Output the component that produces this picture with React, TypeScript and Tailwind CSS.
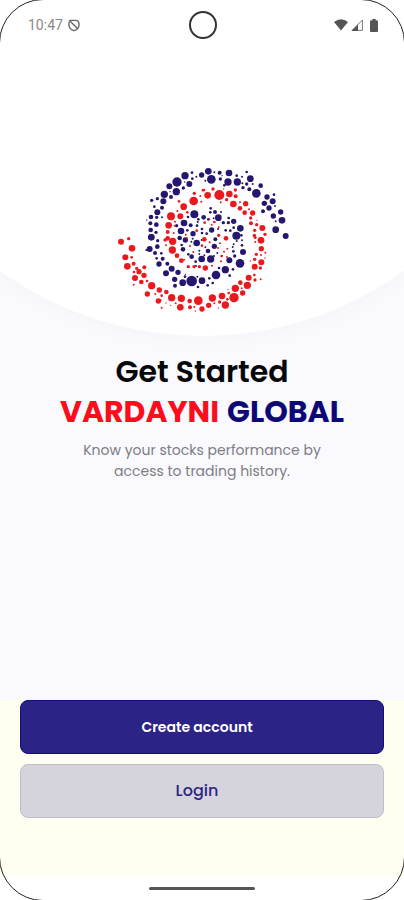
import { useId } from "react";

type Dot = [number, number, number];

const NAVY_DOTS: Dot[] = [
    // outer arm, left side up to the top
    [124, 231, 9], [122, 210, 7], [121, 190, 6], [123, 171, 7], [142, 157, 9], [160, 124, 9],
    [163, 103, 11], [178, 79, 9], [201, 66, 14], [225, 47, 11], [238, 72, 9], [199, 95, 11],
    [125, 121, 5], [142, 116, 5], [133, 140, 4], [156, 143, 6], [140, 172, 5], [156, 172, 3],
    [139, 194, 7], [138, 217, 5], [183, 111, 6], [180, 95, 2], [220, 84, 5], [246, 38, 4],
    [247, 56, 4], [259, 50, 3], [224, 66, 2], [275, 45, 8], [286, 62, 3], [110, 180, 2],
    // outer arm, top to the right tail
    [295, 34, 10], [304, 58, 13], [313, 37, 3], [329, 38, 6], [357, 39, 10], [331, 57, 5],
    [354, 66, 11], [382, 66, 11], [380, 47, 4], [396, 50, 3], [410, 36, 4], [421, 56, 10],
    [410, 72, 5], [428, 72, 3], [399, 83, 5], [418, 88, 6], [439, 100, 13], [452, 77, 7],
    [471, 111, 8], [492, 104, 4], [463, 130, 8], [488, 124, 9], [477, 144, 8], [459, 154, 6],
    [490, 168, 8], [512, 156, 8], [495, 138, 3], [516, 181, 10], [497, 184, 3], [497, 209, 10],
    [527, 228, 9], [336, 47, 2], [343, 76, 4], [397, 70, 3],
    // second half of the outer arm, along the bottom
    [124, 232, 10], [143, 242, 5], [119, 267, 9], [142, 260, 7], [109, 270, 3], [135, 279, 6],
    [154, 280, 4], [140, 295, 4], [158, 296, 6], [147, 312, 8], [172, 311, 6], [168, 340, 9],
    [185, 326, 9], [204, 337, 8], [194, 358, 8], [218, 368, 10], [245, 363, 16], [195, 377, 6],
    [225, 350, 4], [262, 350, 3], [276, 362, 10], [264, 381, 4], [226, 343, 2], [293, 376, 4],
    [298, 355, 4], [318, 345, 13], [346, 329, 11], [308, 369, 4], [327, 324, 4],
    [359, 347, 4], [369, 328, 4], [358, 301, 9], [390, 310, 13], [374, 288, 5], [399, 276, 9],
    [396, 256, 4], [396, 241, 3], [394, 226, 4], [379, 227, 12], [391, 205, 10], [371, 184, 8],
    [371, 203, 4], [355, 188, 5], [356, 174, 4], [340, 188, 5], [325, 173, 10], [333, 156, 3],
    [315, 156, 6], [302, 145, 4], [301, 157, 4], [311, 175, 3], [295, 178, 4], [281, 172, 7],
    // core
    [253, 163, 12], [234, 171, 4], [265, 178, 4], [222, 189, 10], [242, 196, 6], [213, 213, 10],
    [200, 197, 5], [232, 211, 4], [249, 221, 8], [263, 186, 3], [261, 197, 4], [276, 207, 4],
    [276, 219, 4], [290, 221, 4], [305, 210, 8], [324, 207, 3], [347, 211, 4], [361, 212, 4],
    [209, 234, 7], [226, 240, 8], [215, 255, 4], [219, 268, 7], [260, 249, 10], [244, 245, 3],
    [275, 240, 3], [284, 238, 4], [248, 236, 3], [316, 238, 6], [313, 259, 8], [294, 273, 7],
    [286, 262, 3], [245, 290, 7], [257, 305, 4], [275, 297, 10], [302, 297, 11], [268, 282, 3],
    [283, 286, 3], [312, 288, 3], [322, 279, 3], [371, 253, 3], [370, 274, 4], [368, 261, 3],
    [380, 243, 3], [268, 272, 3], [235, 283, 4], [258, 318, 3],
];

const RED_DOTS: Dot[] = [
    // inner arm, from its top to the left
    [251, 123, 13], [221, 140, 10], [183, 169, 12], [211, 169, 9], [176, 196, 10], [173, 216, 6],
    [207, 124, 4], [202, 153, 3], [195, 185, 3], [194, 197, 3], [173, 235, 7], [191, 219, 3],
    [253, 100, 5], [279, 91, 4], [271, 108, 3], [232, 157, 4], [274, 125, 3],
    [188, 244, 11], [187, 270, 11], [201, 287, 7], [214, 302, 7], [235, 320, 5], [252, 320, 5],
    [268, 320, 5], [286, 324, 8], [222, 299, 3], [165, 240, 5], [168, 256, 3],
    // inner arm, top to the right
    [293, 106, 10], [282, 90, 4], [309, 87, 5], [328, 105, 15], [358, 102, 10], [376, 90, 5],
    [377, 109, 6], [341, 87, 2], [350, 119, 5], [332, 127, 3], [370, 132, 10], [390, 145, 7],
    [390, 127, 3], [407, 131, 8], [404, 158, 7], [428, 159, 8], [417, 148, 3], [422, 174, 5],
    [423, 190, 6], [440, 194, 5], [457, 204, 9], [441, 181, 2], [434, 211, 5], [465, 223, 5],
    [433, 226, 5], [453, 237, 6], [436, 233, 4],
    // outer arm, right side down to the bottom
    [453, 241, 10], [434, 231, 4], [436, 246, 3], [454, 266, 8], [439, 283, 5], [453, 285, 3],
    [466, 278, 3], [465, 294, 2], [434, 320, 9], [434, 298, 5], [454, 307, 9], [451, 324, 5],
    [421, 303, 2], [416, 353, 9], [433, 345, 4], [435, 360, 5], [452, 358, 3], [412, 376, 11],
    [391, 368, 7], [376, 385, 11], [395, 385, 3], [398, 399, 8], [372, 413, 14], [346, 435, 11],
    [356, 399, 4], [336, 408, 10], [352, 418, 4], [307, 414, 11], [329, 426, 5], [296, 436, 8],
    [276, 447, 8], [325, 444, 2], [313, 430, 3], [354, 388, 2],
    // outer arm, bottom to the left tail
    [265, 422, 13], [239, 423, 7], [240, 442, 6], [214, 415, 11], [211, 442, 10], [185, 413, 11],
    [169, 396, 7], [148, 390, 8], [125, 377, 11], [112, 402, 8], [145, 423, 8], [136, 402, 3],
    [155, 407, 4], [152, 421, 3], [155, 443, 3], [168, 429, 2], [182, 436, 2], [197, 430, 3],
    [253, 441, 3], [256, 453, 2], [94, 366, 7], [102, 346, 8], [111, 363, 4], [75, 354, 9],
    [87, 335, 8], [103, 322, 6], [72, 336, 4], [52, 319, 10], [71, 311, 6], [80, 325, 5],
    [46, 292, 9], [65, 292, 4], [66, 265, 10], [33, 245, 9], [56, 236, 5], [71, 374, 3],
    // core
    [298, 178, 3], [284, 188, 4], [313, 186, 4], [305, 194, 3], [260, 212, 4], [326, 226, 5],
    [326, 202, 3], [283, 238, 7], [348, 235, 7], [230, 234, 3], [227, 224, 3],
    [240, 258, 3], [250, 276, 3], [299, 247, 3], [324, 264, 3], [333, 304, 3], [335, 288, 4],
    [351, 291, 3], [276, 257, 4], [330, 250, 3], [342, 275, 3], [352, 266, 3], [306, 317, 3],
];

function Dots({ dots, className }: { dots: Dot[]; className: string }) {
    return (
        <g className={className}>
            {dots.map(([x, y, r], i) => (
                <circle key={i} cx={x} cy={y} r={r} />
            ))}
        </g>
    );
}

function Logo() {
    const titleId = useId();

    return (
        <svg viewBox="0 0 570 480" className="w-[190px]" role="img" aria-labelledby={titleId}>
            <g id={titleId} aria-label="Vardayni Global">
                <Dots dots={NAVY_DOTS} className="fill-[#24176f]" />
                <Dots dots={RED_DOTS} className="fill-[#e9191d]" />
            </g>
        </svg>
    );
}

function StatusBar() {
    return (
        <header className="relative grid grid-cols-3 items-center h-[50px] pl-7 pr-[26px] text-[#888]">
            <div className="flex items-center gap-1">
                <span className="text-sm font-[Roboto,sans-serif]">10:47</span>
                <svg viewBox="0 0 14 14" className="size-[14px] fill-none stroke-[#666]" strokeWidth="1.4">
                    <path d="M3 2.4H8.6Q12 2.6 12 5.8V7.2Q11.8 11 7 12.7Q2.2 11 2 7.2V3.4" />
                    <path d="M2.2 2.2L10.6 10.8" />
                </svg>
            </div>
            <div className="size-7 rounded-full border-2 border-[#333] justify-self-center" />
            <div className="flex items-center justify-end gap-[3px]">
                <svg viewBox="0 0 14 12" className="w-[14px] fill-[#555]">
                    <path d="M0 3Q7-2.4 14 3L7 11.6Z" />
                </svg>
                <svg viewBox="0 0 12 12" className="w-3">
                    <path d="M1 11.4L11.4 1V11.4Z" className="fill-none stroke-[#777]" />
                    <path d="M0.5 12L7 5.4V12Z" className="fill-[#555]" />
                </svg>
                <svg viewBox="0 0 8 13" className="w-2 ml-1 fill-[#555]">
                    <path d="M2.4 0H5.6V1.2H7Q8 1.4 8 2.4V12Q8 13 7 13H1Q0 13 0 12V2.4Q0 1.4 1 1.2H2.4Z" />
                </svg>
            </div>
        </header>
    );
}

export default function App() {
    return (
        <main className="relative overflow-hidden min-h-screen flex flex-col bg-[#f9f9fe] font-[Poppins,Inter,sans-serif]">

            <div className="relative h-[336px]">
                <div className="absolute bottom-0 left-1/2 -translate-x-1/2 w-[171%] aspect-square rounded-full bg-white shadow-[0_0_24px_rgba(0,0,0,0.03)]" />
                <StatusBar />
                <div className="relative flex justify-center pt-[110px] pl-1.5">
                    <Logo />
                </div>
            </div>

            <section className="flex-1 flex flex-col items-center pt-4 text-center">
                <h1 className="text-[30px] leading-10 font-semibold text-[#080808]">
                    Get Started
                    <span className="flex justify-center gap-2 font-bold text-[#fb0d1b]">
                        <span>VARDAYNI</span>
                        <span className="text-[#0e0877]">GLOBAL</span>
                    </span>
                </h1>
                <p className="mt-2 w-[260px] text-sm leading-[21px] text-[#7d7d82]">
                    Know your stocks performance by access to trading history.
                </p>
            </section>

            <div className="h-44 px-5 flex flex-col gap-[10px] bg-[#fffff1]">
                <button type="button" className="h-[54px] shrink-0 rounded-lg bg-[#2b2386] border border-[#160c78] text-sm font-semibold text-white pr-[10px]">
                    Create account
                </button>
                <button type="button" className="h-[54px] shrink-0 rounded-lg bg-[#d5d4dc] border border-[#bfbdcb] text-base font-medium text-[#2b2386] pr-[10px]">
                    Login
                </button>
            </div>

            <div className="h-6 flex justify-center items-center bg-white">
                <div className="w-[106px] h-[3px] rounded-full bg-[#555]" />
            </div>

            <div className="absolute -inset-px rounded-[44px] border border-[#222] pointer-events-none" />
        </main>
    );
}
